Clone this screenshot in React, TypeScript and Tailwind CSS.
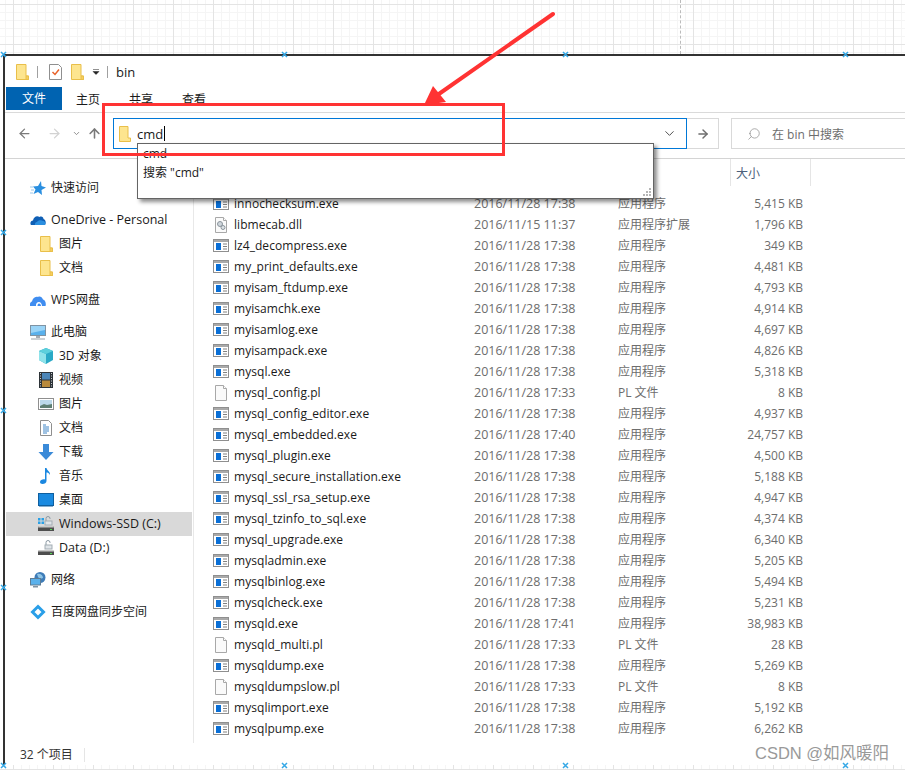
import { ArrowLeft, ArrowRight, ArrowUp, ChevronDown, Search } from 'lucide-react'
import type { ReactNode } from 'react'

const FONT = "font-['Open_Sans','Noto_Sans_CJK_SC',sans-serif]"

function Svg({ children, w = 16, h = 16, className = '' }: { children: ReactNode; w?: number; h?: number; className?: string }) {
  return (
    <svg width={w} height={h} viewBox={`0 0 ${w} ${h}`} className={`shrink-0 ${className}`} aria-hidden>
      {children}
    </svg>
  )
}

function Folder() {
  return (
    <Svg>
      <path d="M2.500.5h9.500v11.500h2.500v3.500H2.500z" fill="#fde58f" stroke="#e9bf4a" />
      <path d="M12 15.500v-3.500h2.500v3.500z" fill="#f6cf5f" stroke="#e9bf4a" />
    </Svg>
  )
}

function ExeIcon() {
  return (
    <Svg h={13}>
      <rect x="0.500" y="0.500" width="15" height="12" fill="#fff" stroke="#8f8f8f" />
      <rect x="1" y="1" width="14" height="2" fill="#a9a9a9" />
      <rect x="3" y="4" width="5" height="7" fill="#0a6fd6" />
      <path d="M10 5h4M10 7.500h4M10 10h4" stroke="#808080" />
    </Svg>
  )
}

function PageIcon({ dll }: { dll?: boolean }) {
  return (
    <Svg>
      <path d="M2.500.5h8l3 3v12h-11z" fill="#fafafa" stroke="#a8a8a8" />
      <path d="M10.500.5v3h3" fill="#fff" stroke="#a8a8a8" />
      {dll && (
        <>
          <circle cx="7" cy="7" r="2.500" fill="#cfd6dc" stroke="#8a949c" />
          <circle cx="10" cy="10.500" r="2" fill="#dde2e6" stroke="#8a949c" />
        </>
      )}
    </Svg>
  )
}

const Star = () => (
  <Svg>
    <path d="M11 1l.5 5L16 7.500l-4.500 2.500.5 5-4-3-4.500 2 2-4.500L3 6.500l5-.5z" fill="#2a8fe0" />
    <path d="M0 7h3M1 10h3M0 13h3" stroke="#9cc8ea" />
  </Svg>
)
const OneDrive = () => (
  <Svg>
    <path d="M1 13c-1.500-2 0-4.500 2-4.500.5-3.500 4-5.500 6.500-3.500 2-1 4 0 4 2 2 .5 3 3.500 1.500 6z" fill="#0f5fb5" />
    <path d="M5 13c-.5-1.500.5-3 2-3 1-2 4-2.500 6-1 2 0 3 2.500 2 4z" fill="#2a8fe0" />
  </Svg>
)
const WpsCloud = () => (
  <Svg>
    <path d="M0 14c-.5-2 .5-4.500 2-4.500.5-3 3-5.500 6-4.500 2-1 4 0 5 2.500 2 0 3.500 4 2.500 6.500z" fill="#3f8df0" />
    <path d="M6 14c-.5-2 1-4 3-4 1.500 0 3 2 3 4z" fill="#fff" />
    <path d="M7.500 14c0-1.500 .5-2.500 1.500-2.500s2 1 2 2.500z" fill="#3f8df0" />
  </Svg>
)
const Monitor = () => (
  <Svg>
    <rect x="0.500" y="1.500" width="15" height="10" fill="#5ab1ec" stroke="#7f93a3" />
    <path d="M1 2h14v4L1 9z" fill="#9ad4f7" />
    <path d="M6 12h4v2H6z" fill="#a5adb4" />
    <path d="M1 15h14" stroke="#9aa3aa" />
  </Svg>
)
const Cube = () => (
  <Svg>
    <path d="M8 0l7 3v9l-7 4-7-4V3z" fill="#2aa9c6" />
    <path d="M1 3l7 3v10l-7-4z" fill="#8fe3ea" />
    <path d="M8 0l7 3-7 3-7-3z" fill="#5cd0dc" />
  </Svg>
)
const Film = () => (
  <Svg>
    <rect x="1" y="0" width="14" height="16" fill="#2d3338" />
    <rect x="4" y="1" width="8" height="6.500" fill="#4c86b8" />
    <rect x="4" y="8.500" width="8" height="6.500" fill="#b98a3c" />
    <path d="M2.500 1v14M13.500 1v14" stroke="#c9ced2" strokeDasharray="1 1.500" />
  </Svg>
)
const Picture = () => (
  <Svg>
    <rect x="0.500" y="2.500" width="15" height="11" fill="#fff" stroke="#8f8f8f" />
    <rect x="2" y="4" width="12" height="8" fill="#bcd9ea" />
    <path d="M2 10l4-2 3 1 5-1v4H2z" fill="#5f7f72" />
  </Svg>
)
const DocIcon = () => (
  <Svg>
    <path d="M2.500.5h8l3 3v12h-11z" fill="#fff" stroke="#8f8f8f" />
    <path d="M5 5h3M5 7h6M5 9h6M5 11h6M5 13h4" stroke="#3e85c6" />
  </Svg>
)
const Download = () => (
  <Svg>
    <path d="M5 0h6v8h4.500L8 16 .5 8H5z" fill="#3a8ad8" />
  </Svg>
)
const Music = () => (
  <Svg>
    <path d="M7 0h1.500c.5 3 4 3.500 3.500 7-1-2-2.500-2.500-3.500-2.500V13c0 2-2 3-4 3-1.500 0-2.500-1-2.500-2 0-2 3-3 5-2.500z" fill="#1a87e0" />
  </Svg>
)
const Desktop = () => (
  <Svg>
    <rect x="0.500" y="1.500" width="15" height="12" fill="#1a8ae0" stroke="#0f5f9f" />
    <path d="M1 13h14v1.500H1z" fill="#0f5f9f" />
  </Svg>
)
const Drive = ({ win }: { win?: boolean }) => (
  <Svg>
    {win ? (
      <path d="M0 2h2.500v2.500H0zM3.500 2H6v2.500H3.500zM0 5.500h2.500V8H0zM3.500 5.500H6V8H3.500z" fill="#2aa0e6" />
    ) : null}
    <path d="M8 6V2.500a2 2 0 0 1 4 0V3" fill="none" stroke="#8b99a3" />
    <rect x="7" y="5" width="7" height="4" fill="#dfe4e8" stroke="#a3adb4" />
    <path d="M1 10h14l1 2v3H0v-3z" fill="#4e4e4e" />
    <path d="M1 10h14l.5 1.500H.5z" fill="#c9c9c9" />
    <rect x="12" y="13" width="2" height="1" fill="#57d957" />
  </Svg>
)
const Network = () => (
  <Svg>
    <circle cx="10" cy="5.500" r="5.500" fill="#3e7cb8" />
    <path d="M7 2c3-1 6 1 6 4l-3 1-2-2z" fill="#8ec4e6" />
    <rect x="0.500" y="6.500" width="10" height="6.500" fill="#5ab1ec" stroke="#5e7d95" />
    <path d="M3 14h5v1.500H3z" fill="#7f93a3" />
  </Svg>
)
const Baidu = () => (
  <Svg>
    <path d="M8 2.500L13.500 8 8 13.500 2.500 8z" fill="none" stroke="#2a9fe8" strokeWidth="3" />
  </Svg>
)

type NavRow = { icon: ReactNode; label: string; sub?: boolean; gap?: boolean; active?: boolean; wide?: boolean }

const navRows: NavRow[] = [
  { icon: <Star />, label: '快速访问' },
  { icon: <OneDrive />, label: 'OneDrive - Personal', gap: true, wide: true },
  { icon: <Folder />, label: '图片', sub: true },
  { icon: <Folder />, label: '文档', sub: true },
  { icon: <WpsCloud />, label: 'WPS网盘', gap: true },
  { icon: <Monitor />, label: '此电脑', gap: true },
  { icon: <Cube />, label: '3D 对象', sub: true },
  { icon: <Film />, label: '视频', sub: true },
  { icon: <Picture />, label: '图片', sub: true },
  { icon: <DocIcon />, label: '文档', sub: true },
  { icon: <Download />, label: '下载', sub: true },
  { icon: <Music />, label: '音乐', sub: true },
  { icon: <Desktop />, label: '桌面', sub: true },
  { icon: <Drive win />, label: 'Windows-SSD (C:)', sub: true, active: true, wide: true },
  { icon: <Drive />, label: 'Data (D:)', sub: true, wide: true },
  { icon: <Network />, label: '网络', gap: true },
  { icon: <Baidu />, label: '百度网盘同步空间', gap: true },
]

const APP = '应用程序'
const PL = 'PL 文件'
const D = '2016/11/28 17:38'

const files: [string, string, string, string][] = [
  ['innochecksum.exe', D, APP, '5,415 KB'],
  ['libmecab.dll', '2016/11/15 11:37', '应用程序扩展', '1,796 KB'],
  ['lz4_decompress.exe', D, APP, '349 KB'],
  ['my_print_defaults.exe', D, APP, '4,481 KB'],
  ['myisam_ftdump.exe', D, APP, '4,793 KB'],
  ['myisamchk.exe', D, APP, '4,914 KB'],
  ['myisamlog.exe', D, APP, '4,697 KB'],
  ['myisampack.exe', D, APP, '4,826 KB'],
  ['mysql.exe', D, APP, '5,318 KB'],
  ['mysql_config.pl', '2016/11/28 17:33', PL, '8 KB'],
  ['mysql_config_editor.exe', D, APP, '4,937 KB'],
  ['mysql_embedded.exe', '2016/11/28 17:40', APP, '24,757 KB'],
  ['mysql_plugin.exe', D, APP, '4,500 KB'],
  ['mysql_secure_installation.exe', D, APP, '5,188 KB'],
  ['mysql_ssl_rsa_setup.exe', D, APP, '4,947 KB'],
  ['mysql_tzinfo_to_sql.exe', D, APP, '4,374 KB'],
  ['mysql_upgrade.exe', D, APP, '6,340 KB'],
  ['mysqladmin.exe', D, APP, '5,205 KB'],
  ['mysqlbinlog.exe', D, APP, '5,494 KB'],
  ['mysqlcheck.exe', D, APP, '5,231 KB'],
  ['mysqld.exe', '2016/11/28 17:41', APP, '38,983 KB'],
  ['mysqld_multi.pl', '2016/11/28 17:33', PL, '28 KB'],
  ['mysqldump.exe', D, APP, '5,269 KB'],
  ['mysqldumpslow.pl', '2016/11/28 17:33', PL, '8 KB'],
  ['mysqlimport.exe', D, APP, '5,192 KB'],
  ['mysqlpump.exe', D, APP, '6,262 KB'],
]

const markers: [string, string][] = [
  ['left-[0px]', 'top-[51px]'],
  ['left-[281px]', 'top-[51px]'],
  ['left-[562px]', 'top-[51px]'],
  ['left-[842px]', 'top-[51px]'],
  ['left-[0px]', 'top-[229px]'],
  ['left-[0px]', 'top-[407px]'],
  ['left-[0px]', 'top-[584px]'],
  ['left-[0px]', 'top-[762px]'],
  ['left-[281px]', 'top-[762px]'],
  ['left-[562px]', 'top-[762px]'],
  ['left-[842px]', 'top-[762px]'],
]

const GRID =
  'bg-[linear-gradient(#e4e4e4_1px,transparent_1px),linear-gradient(90deg,#e4e4e4_1px,transparent_1px),linear-gradient(#f5f5f5_1px,transparent_1px),linear-gradient(90deg,#f5f5f5_1px,transparent_1px)] bg-size-[40px_40px,40px_40px,8px_8px,8px_8px] bg-position-[13px_4px,13px_4px,5px_4px,5px_4px]'

export default function App() {
  return (
    <div className={`relative flex h-[770px] w-[905px] flex-col overflow-hidden bg-white text-xs text-[#1a1a1a] ${FONT}`}>
      <div className={`relative h-[54px] shrink-0 ${GRID}`}>
        <div className="absolute top-0 left-[680px] h-full border-l border-dashed border-[#bbbbbb]" />
      </div>

      <div className="ml-[3px] flex min-h-0 flex-1 flex-col border-t-2 border-l-[2px] border-[#333333] bg-white">
        <div className="flex h-[31px] shrink-0 items-center pl-[9px]">
          <Folder />
          <div className="ml-[7px] h-[12px] w-px bg-[#a0a0a0]" />
          <Svg className="ml-[10px]">
            <path d="M1.500.5h9l3 3v12h-12z" fill="#fff" stroke="#8f8f8f" />
            <path d="M4.500 8l2.500 2.500 4-5" fill="none" stroke="#e8622a" strokeWidth="1.500" />
          </Svg>
          <div className="ml-[5px]">
            <Folder />
          </div>
          <svg width="8" height="6" viewBox="0 0 8 6" className="ml-[7px]" aria-hidden>
            <path d="M1 .5h6M1 2.500h6l-3 3z" fill="#222" stroke="#222" strokeWidth="0.500" />
          </svg>
          <div className="ml-[7px] h-[12px] w-px bg-[#a0a0a0]" />
          <span className="ml-[8px] pt-[2px] text-[13px]">bin</span>
        </div>

        <div className="flex h-[26px] shrink-0 items-start border-b border-[#dadada] text-[12px]">
          <div className="ml-px flex h-[23px] w-[56px] items-center justify-center bg-[#0063b1] pt-[1px] text-white">文件</div>
          <div className="ml-[14px] flex h-[25px] w-[24px] items-center">主页</div>
          <div className="ml-[29px] flex h-[25px] w-[24px] items-center">共享</div>
          <div className="ml-[29px] flex h-[25px] w-[24px] items-center">查看</div>
        </div>

        <div className="flex h-[46px] shrink-0 items-start border-b border-[#d4d4d4] pt-[5px]">
          <div className="flex h-[31px] w-[108px] shrink-0 items-center">
            <ArrowLeft size={15} strokeWidth={2} className="ml-[12px] text-[#7a7a7a]" />
            <ArrowRight size={15} strokeWidth={2} className="ml-[15px] text-[#d2d2d2]" />
            <ChevronDown size={9} strokeWidth={2.5} className="ml-[10px] text-[#8a8a8a]" />
            <ArrowUp size={15} strokeWidth={2.500} className="ml-[6px] text-[#7a7a7a]" />
          </div>
          <div className="flex h-[31px] w-[574px] shrink-0 items-center border border-[#0078d7] pl-[4px]">
            <Svg w={12} h={16} className="ml-px">
              <path d="M.5.5h8.500v11.500h2.500v3.500H.5z" fill="#fde58f" stroke="#e9bf4a" />
            </Svg>
            <span className="ml-[6px] pt-[2px] text-[13px]">cmd</span>
            <span className="ml-px h-[15px] w-px bg-black" />
            <ChevronDown size={15} strokeWidth={1.500} className="mr-[9px] ml-auto text-[#444444]" />
          </div>
          <div className="flex h-[31px] w-[32px] shrink-0 items-center justify-center border-y border-r border-[#d9d9d9]">
            <ArrowRight size={14} strokeWidth={2.500} className="text-[#6e6e6e]" />
          </div>
          <div className="ml-[12px] flex h-[31px] w-[200px] shrink-0 items-center border border-[#d9d9d9] pl-[15px] text-[#6d6d6d]">
            <Search size={14} strokeWidth={1.200} className="-scale-x-100 text-[#8a8a8a]" />
            <span className="ml-[11px] pt-[2px]">在 bin 中搜索</span>
          </div>
        </div>

        <div className="flex min-h-0 flex-1">
          <nav className="w-[189px] shrink-0 border-r border-[#e8e8e8] pt-[17px]">
            {navRows.map((r, i) => (
              <div
                key={i}
                className={`mr-px ml-px flex h-6 items-center gap-[5px] ${r.sub ? 'pl-[32px]' : 'pl-[24px]'} ${r.gap ? 'mt-2' : ''} ${r.active ? 'bg-[#d9d9d9]' : ''}`}
              >
                {r.icon}
                <span className={`whitespace-nowrap ${r.wide ? 'text-[12.5px]' : ''}`}>{r.label}</span>
              </div>
            ))}
          </nav>

          <div className="min-w-0 flex-1">
            <div className="flex h-[34px] items-start pl-[536px] text-[#4c607a]">
              <div className="flex h-[27px] w-[81px] items-center border-x border-[#e5e5e5] pt-[2px] pl-[5px]">大小</div>
            </div>
            {files.map(([name, date, type, size]) => (
              <div key={name} className="flex h-[21px] items-center pl-[19px] whitespace-nowrap">
                <span className="flex w-[261px] shrink-0 items-center gap-[5px] tracking-[0.05px]">
                  {name.endsWith('.exe') ? <ExeIcon /> : <PageIcon dll={name.endsWith('.dll')} />}
                  {name}
                </span>
                <span className="w-[144px] shrink-0 text-[12.5px] leading-[21px] text-[#6d6d6d]">{date}</span>
                <span className="w-[120px] shrink-0 text-[#6d6d6d]">{type}</span>
                <span className="w-[65px] shrink-0 text-right text-[#6d6d6d]">{size}</span>
              </div>
            ))}
          </div>
        </div>

        <div className="flex h-[22px] shrink-0 items-center pt-[2px] pl-[15px] text-[#333333]">
          <span>32 个项目</span>
          <span className="ml-[11px] h-[14px] w-px bg-[#e5e5e5]" />
        </div>
      </div>

      <div className={`h-[5px] shrink-0 ${GRID}`} />

      {/* autocomplete popup, sits over the list */}
      <div className="absolute top-[143px] left-[137px] h-[56px] w-[517px] border border-[#646464] bg-white pl-[5px] shadow-[3px_3px_4px_rgba(0,0,0,0.45)]">
        <div className="h-[19px] leading-[19px]">cmd</div>
        <div className="h-[19px] leading-[19px]">搜索 "cmd"</div>
        <svg width="10" height="10" viewBox="0 0 10 10" className="absolute right-px bottom-px" aria-hidden>
          <path d="M7 1h2v2H7zM4 4h2v2H4zM7 4h2v2H7zM1 7h2v2H1zM4 7h2v2H4zM7 7h2v2H7z" fill="#b5b5b5" />
        </svg>
      </div>

      {/* red annotations */}
      <div className="absolute top-[103px] left-[102px] h-[53px] w-[403px] border-[3.5px] border-[#ff3333]" />
      <svg width="905" height="120" viewBox="0 0 905 120" className="pointer-events-none absolute top-0 left-0" aria-hidden>
        <path d="M553 14L436 96" stroke="#ff3333" strokeWidth="4" strokeLinecap="round" />
        <path d="M424 105L433 86L446 102z" fill="#ff3333" />
      </svg>

      {markers.map(([l, t]) => (
        <svg key={l + t} width="7" height="7" viewBox="0 0 7 7" className={`absolute ${l} ${t}`} aria-hidden>
          <path d="M1 1l5 5M6 1L1 6" stroke="#35a8e6" strokeWidth="1.500" />
        </svg>
      ))}

      <div className="absolute top-[742px] left-[755px] font-['Liberation_Sans','Noto_Sans_CJK_SC',sans-serif] text-[16.5px] whitespace-nowrap text-[#999999] [text-shadow:0_0_2px_#ffffff]">
        CSDN @如风暖阳
      </div>
    </div>
  )
}
